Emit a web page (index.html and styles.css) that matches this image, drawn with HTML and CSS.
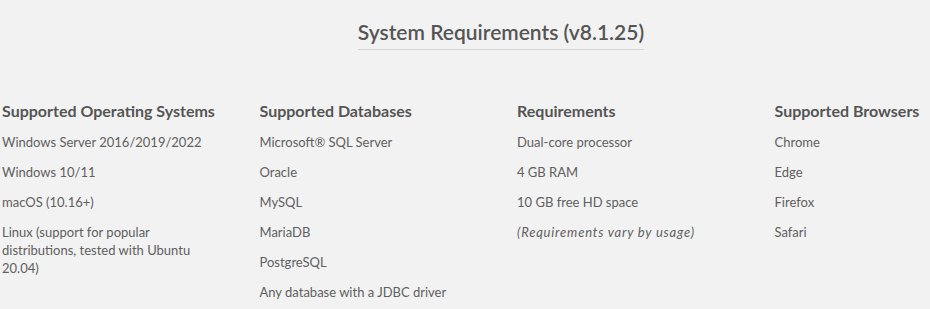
FILE: index.html
```html
<!DOCTYPE html>
<html>
<head>
<meta charset="utf-8">
<link rel="stylesheet" href="styles.css">
</head>
<body>
<div class="wrap">
  <div class="head"><h2 class="title">System Requirements (v8.1.25)</h2></div>
  <div class="cols">
    <div class="col">
      <h3 class="col-title">Supported Operating Systems</h3>
      <ul class="list">
        <li>Windows Server 2016/2019/2022</li>
        <li>Windows 10/11</li>
        <li>macOS (10.16+)</li>
        <li>Linux (support for popular distributions, tested with Ubuntu 20.04)</li>
      </ul>
    </div>
    <div class="col">
      <h3 class="col-title">Supported Databases</h3>
      <ul class="list">
        <li>Microsoft® SQL Server</li>
        <li>Oracle</li>
        <li>MySQL</li>
        <li>MariaDB</li>
        <li>PostgreSQL</li>
        <li>Any database with a JDBC driver</li>
      </ul>
    </div>
    <div class="col">
      <h3 class="col-title">Requirements</h3>
      <ul class="list">
        <li>Dual-core processor</li>
        <li>4 GB RAM</li>
        <li>10 GB free HD space</li>
        <li class="note">(Requirements vary by usage)</li>
      </ul>
    </div>
    <div class="col">
      <h3 class="col-title">Supported Browsers</h3>
      <ul class="list">
        <li>Chrome</li>
        <li>Edge</li>
        <li>Firefox</li>
        <li>Safari</li>
      </ul>
    </div>
  </div>
</div>
</body>
</html>
```
FILE: styles.css
```css
html, body {
  margin: 0;
  padding: 0;
  background: #f2f2f2;
  font-family: Lato, "Open Sans", sans-serif;
  color: #555;
}
.wrap {
  width: 928px;
  margin-left: 2px;
}
.head {
  text-align: center;
  padding-top: 20px;
  padding-left: 70px;
}
.title {
  display: inline-block;
  margin: 0;
  font-size: 21px;
  line-height: 24px;
  font-weight: 600;
  color: #555;
  padding-bottom: 5px;
  border-bottom: 1px solid #d6d6d6;
}
.cols {
  display: grid;
  grid-template-columns: repeat(3, 205px) 1fr;
  column-gap: 52.5px;
  margin-top: 51px;
}
.col-title {
  margin: 0;
  font-size: 16px;
  line-height: 20px;
  font-weight: 700;
  color: #555;
  white-space: nowrap;
}
.list {
  list-style: none;
  margin: 12px 0 0;
  padding: 0;
  display: flex;
  flex-direction: column;
  gap: 12px;
}
.list li {
  font-size: 13px;
  line-height: 18px;
  color: #606060;
}
.list .note {
  font-style: italic;
  letter-spacing: 0.8px;
}
```
